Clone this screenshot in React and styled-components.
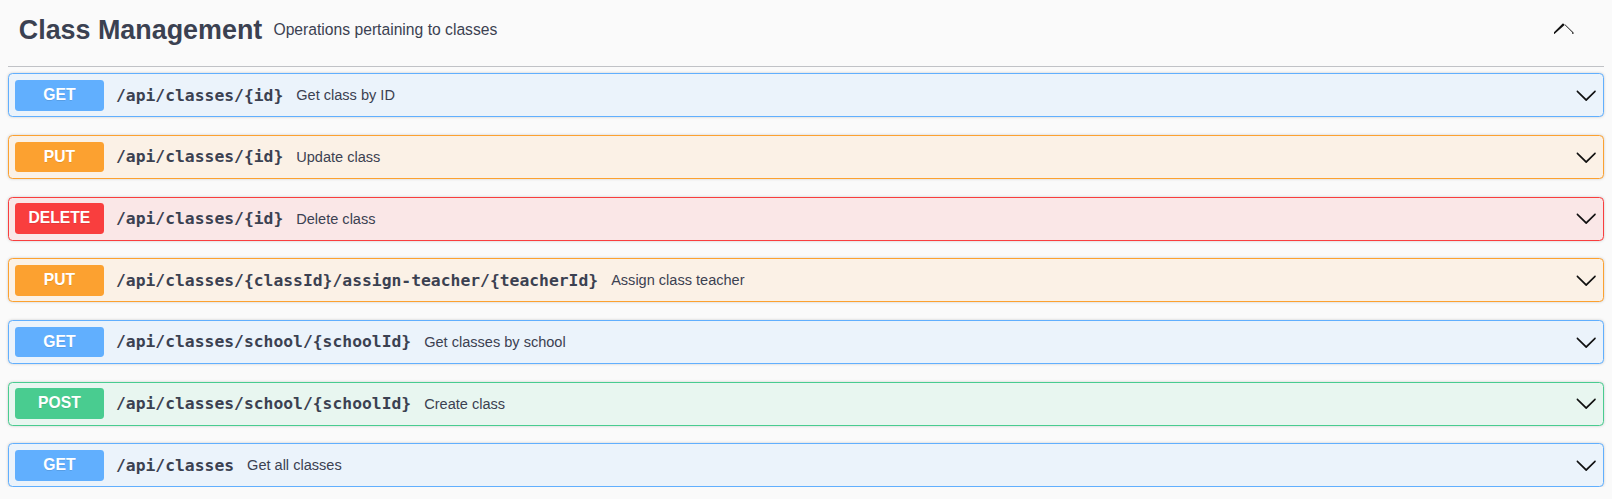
import React from "react";
import styled, { createGlobalStyle } from "styled-components";

const GlobalStyle = createGlobalStyle`
  html, body {
    margin: 0;
    padding: 0;
    background: #fafafa;
    overflow: hidden;
  }
  body {
    font-family: "Liberation Sans", Arial, sans-serif;
    color: #3b4151;
  }
`;

// method colours, same as swagger-ui
const methods = {
  GET: { main: "#61affe", bg: "#ebf3fb" },
  PUT: { main: "#fca130", bg: "#fbf1e6" },
  DELETE: { main: "#f93e3e", bg: "#fae7e7" },
  POST: { main: "#49cc90", bg: "#e8f6f0" },
};

const operations = [
  { method: "GET", path: "/api/classes/{id}", summary: "Get class by ID" },
  { method: "PUT", path: "/api/classes/{id}", summary: "Update class" },
  { method: "DELETE", path: "/api/classes/{id}", summary: "Delete class" },
  {
    method: "PUT",
    path: "/api/classes/{classId}/assign-teacher/{teacherId}",
    summary: "Assign class teacher",
  },
  {
    method: "GET",
    path: "/api/classes/school/{schoolId}",
    summary: "Get classes by school",
  },
  {
    method: "POST",
    path: "/api/classes/school/{schoolId}",
    summary: "Create class",
  },
  { method: "GET", path: "/api/classes", summary: "Get all classes" },
];

const Page = styled.div`
  padding: 0 8px;
`;

const TagHeader = styled.div`
  display: flex;
  align-items: center;
  padding: 14.5px 27.5px 20.6px 10.8px;
  border-bottom: 1px solid rgba(59, 65, 81, 0.3);
  margin-bottom: 6.3px;
  cursor: pointer;
`;

const TagTitle = styled.h3`
  margin: 0;
  font-size: 26.88px;
  line-height: 30.9px;
  font-weight: 700;
  color: #3b4151;
`;

const TagDescription = styled.small`
  flex: 1;
  padding: 0 11.2px;
  font-size: 15.68px;
  line-height: 18px;
  color: #3b4151;
`;

const ToggleButton = styled.button`
  display: flex;
  align-items: center;
  background: none;
  border: none;
  padding: 0;
  margin: 0 0 4px;
  cursor: pointer;
  color: #111;
`;

const Operation = styled.div`
  display: flex;
  align-items: center;
  box-sizing: border-box;
  height: 44px;
  padding: 0 5.6px;
  margin-bottom: 17.67px;
  border: 1px solid ${(p) => p.$color};
  border-radius: 4.5px;
  background: ${(p) => p.$bg};
  box-shadow: 0 0 3px rgba(0, 0, 0, 0.19);
  cursor: pointer;

  &:last-child {
    margin-bottom: 0;
  }
`;

const MethodBadge = styled.span`
  min-width: 89.6px;
  height: 30.8px;
  line-height: 30.8px;
  border-radius: 3.4px;
  background: ${(p) => p.$color};
  color: #fff;
  font-size: 15.68px;
  font-weight: 700;
  text-align: center;
  text-shadow: 0 1px 0 rgba(0, 0, 0, 0.1);
`;

const PathText = styled.span`
  padding: 0 13px 0 11.8px;
  font-family: "DejaVu Sans Mono", "Liberation Mono", monospace;
  font-size: 16.35px;
  font-weight: 700;
  color: #3b4151;
  white-space: nowrap;
`;

const Summary = styled.span`
  flex: 1;
  font-size: 14.56px;
  color: #3b4151;
`;

const Chevron = styled.svg`
  width: 22.4px;
  height: 22.4px;
  flex-shrink: 0;
  fill: #111;
`;

const ArrowDown = () => (
  <Chevron viewBox="0 0 20 20">
    <path d="M17.418 6.109c.272-.268.709-.268.979 0s.271.701 0 .969l-7.908 7.83c-.27.268-.707.268-.979 0l-7.908-7.83c-.27-.268-.27-.701 0-.969.271-.268.709-.268.979 0L10 13.25l7.418-7.141z" />
  </Chevron>
);

const ArrowUp = () => (
  <Chevron viewBox="0 0 20 20">
    <path d="M17.418 14.908c-.272.268-.709.268-.979 0s-.271-.701 0-.969l-7.908-7.83c-.27-.268-.707-.268-.979 0l-7.908 7.83c-.27.268-.27.701 0 .969.271.268.709.268.979 0L10 6.75l7.418 7.141z" />
  </Chevron>
);

export default function App() {
  return (
    <Page>
      <GlobalStyle />
      <TagHeader>
        <TagTitle>Class Management</TagTitle>
        <TagDescription>Operations pertaining to classes</TagDescription>
        <ToggleButton aria-label="Collapse operation">
          <ArrowUp />
        </ToggleButton>
      </TagHeader>
      {operations.map((op, i) => {
        const c = methods[op.method];
        return (
          <Operation key={i} $color={c.main} $bg={c.bg}>
            <MethodBadge $color={c.main}>{op.method}</MethodBadge>
            <PathText>{op.path}</PathText>
            <Summary>{op.summary}</Summary>
            <ArrowDown />
          </Operation>
        );
      })}
    </Page>
  );
}
